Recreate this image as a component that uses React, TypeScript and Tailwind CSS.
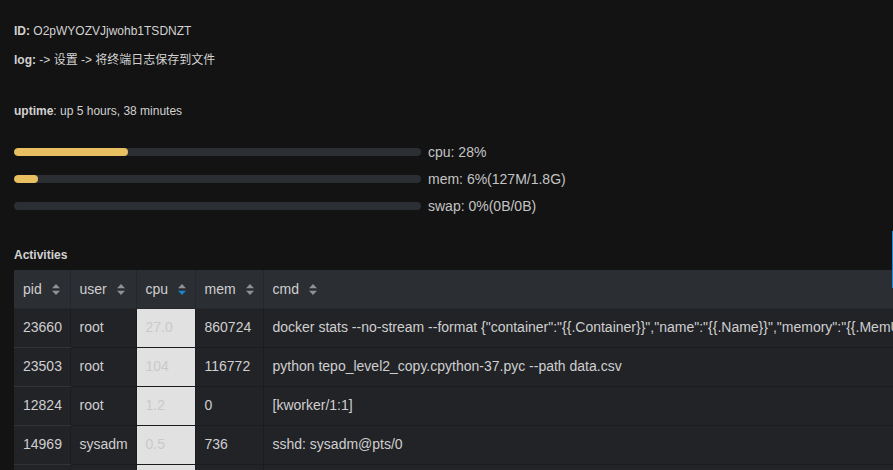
import React from "react";

const font = { fontFamily: '"Liberation Sans", Arial, "Noto Sans CJK SC", sans-serif' };

function SortIcon({ active }: { active?: boolean }) {
  return (
    <svg width="8" height="11" viewBox="0 0 8 11" className="inline-block ml-[10px] align-[-1px]">
      <path d="M4 0 L8 4.2 L0 4.2 Z" fill="#8e9196" />
      <path d="M4 11 L8 6.8 L0 6.8 Z" fill={active ? "#1a86c9" : "#8e9196"} />
    </svg>
  );
}

const rows = [
  ["23660", "root", "27.0", "860724", 'docker stats --no-stream --format {"container":"{{.Container}}","name":"{{.Name}}","memory":"{{.MemUsage}}","cpu":"{{.CPUPerc}}"}'],
  ["23503", "root", "104", "116772", "python tepo_level2_copy.cpython-37.pyc --path data.csv"],
  ["12824", "root", "1.2", "0", "[kworker/1:1]"],
  ["14969", "sysadm", "0.5", "736", "sshd: sysadm@pts/0"],
  ["1", "root", "0.0", "0", "/sbin/init"],
];

function Bar({ pct, label }: { pct: number; label: string }) {
  return (
    <div className="flex items-center h-[27px]">
      <div className="w-[407px] h-[8px] rounded-full bg-[#2b2e33] overflow-hidden">
        <div className="h-full rounded-full bg-[#e8c062]" style={{ width: `${pct}%` }} />
      </div>
      <span className="ml-[7px] text-[14px] leading-[20px] text-[#c4c4c4]">{label}</span>
    </div>
  );
}

export default function App() {
  return (
    <div className="w-[893px] h-[470px] overflow-hidden bg-[#131313] relative" style={font}>
      <div className="absolute right-0 top-[231px] w-[1px] h-[57px] bg-[#1a8fd8] z-10" />
      <div className="pl-[14px] pt-[23px]">
        <p className="text-[12px] leading-[16px] text-[#d2d2d2]">
          <b className="font-bold">ID:</b> O2pWYOZVJjwohb1TSDNZT
        </p>
        <p className="mt-[13px] text-[12px] leading-[16px] text-[#d2d2d2]">
          <b className="font-bold">log:</b> -&gt; 设置 -&gt; 将终端日志保存到文件
        </p>
        <p className="mt-[35px] text-[12px] leading-[16px] text-[#d2d2d2]">
          <b className="font-bold">uptime</b>: up 5 hours, 38 minutes
        </p>
        <div className="mt-[19px]">
          <Bar pct={28} label="cpu: 28%" />
          <Bar pct={6} label="mem: 6%(127M/1.8G)" />
          <Bar pct={0} label="swap: 0%(0B/0B)" />
        </div>
        <p className="mt-[28px] text-[12px] leading-[16px] font-bold text-[#d2d2d2]">Activities</p>
        <table className="mt-[7px] w-[949px] table-fixed border-collapse whitespace-nowrap text-[14px] text-[#cfcfcf]">
          <colgroup>
            <col className="w-[56px]" />
            <col className="w-[66px]" />
            <col className="w-[59px]" />
            <col className="w-[68px]" />
            <col className="w-[700px]" />
          </colgroup>
          <thead>
            <tr className="h-[38px] bg-[#2b2e33]">
              <th className="pl-[9px] pr-0 pt-[2px] text-left font-normal border-b border-[#25272b]">pid<SortIcon /></th>
              <th className="pl-[9px] pr-0 pt-[2px] text-left font-normal border-l border-b border-[#25272b]">user<SortIcon /></th>
              <th className="pl-[9px] pr-0 pt-[2px] text-left font-normal border-l border-b border-[#25272b]">cpu<SortIcon active /></th>
              <th className="pl-[9px] pr-0 pt-[2px] text-left font-normal border-l border-b border-[#25272b]">mem<SortIcon /></th>
              <th className="pl-[9px] pr-0 pt-[2px] text-left font-normal border-l border-b border-[#25272b]">cmd<SortIcon /></th>
            </tr>
          </thead>
          <tbody>
            {rows.map((r) => (
              <tr key={r[0]} className="h-[39px] bg-[#222327]">
                <td className="pl-[9px] pr-0 border-b border-[#313338]">{r[0]}</td>
                <td className="pl-[9px] pr-0 border-l border-b border-[#1b1c1f]">{r[1]}</td>
                <td className="pl-[9px] pr-0 border-l border-b border-[#1b1c1f] bg-[#e1e1e1] text-[#c9c9c9]">{r[2]}</td>
                <td className="pl-[9px] pr-0 border-l border-b border-[#1b1c1f]">{r[3]}</td>
                <td className="pl-[9px] pr-0 border-l border-b border-[#1b1c1f] overflow-hidden">{r[4]}</td>
              </tr>
            ))}
          </tbody>
        </table>
      </div>
    </div>
  );
}
